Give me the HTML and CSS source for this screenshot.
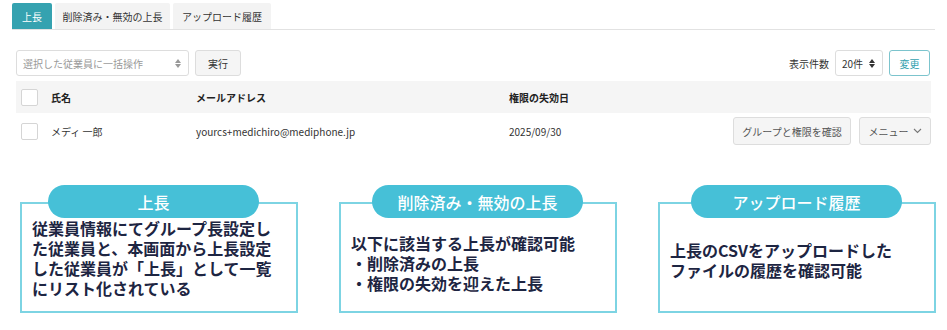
FILE: index.html
```html
<!DOCTYPE html>
<html>
<head>
<meta charset="utf-8">
<title>上長</title>
<link rel="stylesheet" href="styles.css">
</head>
<body>
<div class="page">
    <!-- タブ -->
    <div class="tabs">
        <span class="tab active">上長</span>
        <span class="tab">削除済み・無効の上長</span>
        <span class="tab">アップロード履歴</span>
    </div>

    <!-- 操作バー -->
    <div class="toolbar">
        <div class="bulk">
            <div class="select wide">選択した従業員に一括操作<span class="updown"></span></div>
            <span class="btn">実行</span>
        </div>
        <div class="count">
            <span class="label">表示件数</span>
            <div class="select small">20件<span class="updown dark"></span></div>
            <span class="btn outline">変更</span>
        </div>
    </div>

    <!-- 一覧 -->
    <div class="table">
        <div class="row head">
            <span class="check"></span>
            <span>氏名</span>
            <span>メールアドレス</span>
            <span>権限の失効日</span>
            <span></span>
        </div>
        <div class="row">
            <span class="check"></span>
            <span>メディ 一郎</span>
            <span>yourcs+medichiro@mediphone.jp</span>
            <span>2025/09/30</span>
            <span class="actions">
                <span class="btn tall">グループと権限を確認</span>
                <span class="btn tall">メニュー <svg width="9" height="6" viewBox="0 0 9 6"><path d="M1 1l3.5 3.5L8 1" fill="none" stroke="#777" stroke-width="1.1"/></svg></span>
            </span>
        </div>
    </div>
</div>

<!-- 説明 -->
<div class="notes">
    <div class="note">
        <div class="pill">上長</div>
        <p class="first">従業員情報にてグループ長設定した従業員と、本画面から上長設定した従業員が「上長」として一覧にリスト化されている</p>
    </div>
    <div class="note">
        <div class="pill">削除済み・無効の上長</div>
        <p class="second">以下に該当する上長が確認可能<br>・削除済みの上長<br>・権限の失効を迎えた上長</p>
    </div>
    <div class="note">
        <div class="pill">アップロード履歴</div>
        <p class="third">上長のCSVをアップロードした<br>ファイルの履歴を確認可能</p>
    </div>
</div>
</body>
</html>
```

FILE: styles.css
```css
* {
    margin: 0;
    padding: 0;
    box-sizing: border-box;
}

body {
    font-family: "Noto Sans CJK JP", "Noto Sans", sans-serif;
    font-size: 10px;
    color: #333;
    background: #fff;
}

.page {
    width: 935px;
    padding-top: 3px;
}

.tabs {
    display: flex;
    gap: 3px;
    margin-left: 12px;
    border-bottom: 1px solid #e2e2e2;
}

.tab {
    display: flex;
    align-items: center;
    justify-content: center;
    height: 26px;
    width: 40px;
    white-space: nowrap;
    background: #f3f3f3;
    border-radius: 2px 2px 0 0;
    color: #333;
}

.tab.active {
    background: #35a2b0;
    color: #fff;
}

.tab:nth-child(2) {
    width: 115px;
}

.tab:nth-child(3) {
    width: 98px;
}

.toolbar {
    display: flex;
    justify-content: space-between;
    align-items: center;
    margin: 20px 5px 5px 16px;
}

.bulk,
.count {
    display: flex;
    align-items: center;
    gap: 6px;
}

.select {
    position: relative;
    display: flex;
    align-items: center;
    height: 26px;
    padding: 0 6px;
    border: 1px solid #ddd;
    border-radius: 3px;
    background: #fff;
    white-space: nowrap;
}

.select.wide {
    width: 173px;
    color: #999;
}

.select.small {
    width: 48px;
    color: #333;
}

.updown {
    position: absolute;
    right: 7px;
    top: 8px;
    width: 0;
    height: 0;
    border-left: 3px solid transparent;
    border-right: 3px solid transparent;
    border-bottom: 4px solid #999;
}

.updown::after {
    content: "";
    position: absolute;
    left: -3px;
    top: 5px;
    border-left: 3px solid transparent;
    border-right: 3px solid transparent;
    border-top: 4px solid #999;
}

.updown.dark,
.updown.dark::after {
    border-bottom-color: #333;
    border-top-color: #333;
}

.btn {
    display: inline-flex;
    align-items: center;
    justify-content: center;
    gap: 4px;
    height: 26px;
    padding: 0 12px;
    border: 1px solid #ddd;
    border-radius: 3px;
    background: #f5f5f5;
    color: #333;
    white-space: nowrap;
}

.btn.outline {
    width: 41px;
    padding: 0;
    background: #fff;
    border-color: #7cc4cd;
    color: #35a2b0;
}

.btn.tall {
    height: 28px;
    color: #555;
}

.table {
    margin-left: 16px;
    width: 915px;
}

.row {
    display: grid;
    grid-template-columns: 35px 145px 313px 1fr auto;
    align-items: center;
    height: 36px;
}

.row.head {
    height: 32px;
    background: #f5f5f5;
    font-weight: bold;
    color: #222;
}

.check {
    width: 17px;
    height: 17px;
    margin-left: 5px;
    background: #fff;
    border: 1px solid #d5d5d5;
    border-radius: 2px;
}

.actions {
    display: flex;
    gap: 8px;
}

.actions .btn:first-child {
    width: 118px;
    padding: 0;
}

.actions .btn:last-child {
    width: 72px;
    padding: 0;
}

/* 説明の枠 */
.notes {
    display: flex;
    gap: 41px;
    margin: 36px 0 0 20px;
}

.note {
    position: relative;
    width: 278px;
    height: 128px;
    padding-top: 17px;
}

.note p {
    height: 111px;
    border: 2px solid #7dd4e3;
    color: #1d2542;
    font-size: 16px;
    font-weight: bold;
    line-height: 20px;
}

.pill {
    position: absolute;
    top: 0;
    width: 211px;
    height: 33px;
    border-radius: 17px;
    background: #46c0d7;
    color: #fff;
    font-size: 16px;
    font-weight: 500;
    display: flex;
    align-items: center;
    justify-content: center;
}

.note:nth-child(1) .pill {
    left: 28px;
}

.note:nth-child(2) .pill,
.note:nth-child(3) .pill {
    left: 33px;
}

.first {
    padding: 14px 10px 0 10px;
}

.second {
    padding: 29px 10px 0 10px;
}

.third {
    padding: 36px 10px 0 10px;
}
```
